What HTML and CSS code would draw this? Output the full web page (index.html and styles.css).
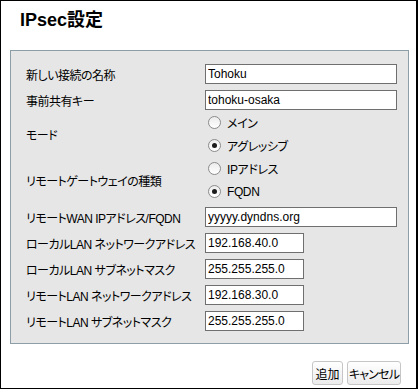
FILE: index.html
```html
<!DOCTYPE html>
<html lang="ja">
<head>
<meta charset="utf-8">
<title>IPsec設定</title>
<link rel="stylesheet" href="styles.css">
</head>
<body>
<div class="frame">
  <h1 class="title">IPsec設定</h1>
  <div class="panel">
    <div class="row">
      <label class="label">新しい接続の名称</label>
      <input class="field field-wide" type="text" value="Tohoku">
    </div>
    <div class="row row-tight">
      <label class="label">事前共有キー</label>
      <input class="field field-wide" type="text" value="tohoku-osaka">
    </div>
    <div class="row row-radio">
      <span class="label">モード</span>
      <div class="radios">
        <div class="radio-line"><span class="radio"></span><span class="radio-text">メイン</span></div>
        <div class="radio-line"><span class="radio checked"></span><span class="radio-text">アグレッシブ</span></div>
      </div>
    </div>
    <div class="row row-radio row-radio-last">
      <span class="label">リモートゲートウェイの種類</span>
      <div class="radios">
        <div class="radio-line"><span class="radio"></span><span class="radio-text">IPアドレス</span></div>
        <div class="radio-line"><span class="radio checked"></span><span class="radio-text">FQDN</span></div>
      </div>
    </div>
    <div class="row">
      <label class="label">リモートWAN IPアドレス/FQDN</label>
      <input class="field field-wide" type="text" value="yyyyy.dyndns.org">
    </div>
    <div class="row">
      <label class="label">ローカルLAN ネットワークアドレス</label>
      <input class="field field-short" type="text" value="192.168.40.0">
    </div>
    <div class="row">
      <label class="label">ローカルLAN サブネットマスク</label>
      <input class="field field-short" type="text" value="255.255.255.0">
    </div>
    <div class="row">
      <label class="label">リモートLAN ネットワークアドレス</label>
      <input class="field field-short" type="text" value="192.168.30.0">
    </div>
    <div class="row row-last">
      <label class="label">リモートLAN サブネットマスク</label>
      <input class="field field-short" type="text" value="255.255.255.0">
    </div>
  </div>
  <div class="actions">
    <button class="btn btn-add" type="button">追加</button>
    <button class="btn btn-cancel" type="button">キャンセル</button>
  </div>
</div>
</body>
</html>
```
FILE: styles.css
```css
html, body {
  margin: 0;
  padding: 0;
  background: #fff;
}

body {
  font-family: "Liberation Sans", Arial, "Noto Sans CJK JP", sans-serif;
  font-size: 12px;
  color: #000;
}

.frame {
  width: 418px;
  height: 389px;
  box-sizing: border-box;
  border: 1px solid #000;
  border-right-width: 2px;
  overflow: hidden;
}

.title {
  margin: 9px 0 0 19px;
  height: 21px;
  line-height: 21px;
  font-size: 18px;
  font-weight: bold;
  font-feature-settings: "palt";
}

.panel {
  margin: 19px 0 0 9px;
  width: 399px;
  box-sizing: border-box;
  background: #e6e6e6;
  border: 1px solid #8d9ea6;
  padding: 13px 0 12px 15px;
}

.row {
  display: flex;
  align-items: center;
  height: 20px;
  margin-bottom: 6px;
}

.row-tight {
  margin-bottom: 1px;
}

.row-radio {
  height: 46px;
  margin-bottom: 0;
}

.row-radio-last {
  margin-bottom: 4px;
}

.row-last {
  margin-bottom: 0;
}

.label {
  width: 179px;
  flex: none;
  white-space: nowrap;
  font-size: 12px;
  letter-spacing: -0.5px;
  font-feature-settings: "palt";
}

.field {
  box-sizing: border-box;
  height: 20px;
  margin: 0;
  border: 1px solid #6f6f6f;
  padding: 0 2px;
  background: #fff;
  font-family: "Liberation Sans", Arial, sans-serif;
  font-size: 12px;
  color: #000;
  outline: none;
}

.field-wide {
  width: 192px;
}

.field-short {
  width: 99px;
}

.radios {
  display: flex;
  flex-direction: column;
}

.radio-line {
  display: flex;
  align-items: center;
  height: 23px;
  padding-left: 3px;
}

.radio {
  width: 13px;
  height: 13px;
  box-sizing: border-box;
  border: 1px solid #8b8b8b;
  border-radius: 50%;
  background: linear-gradient(#ececec, #ffffff);
  display: flex;
  align-items: center;
  justify-content: center;
}

.radio.checked::after {
  content: "";
  width: 5px;
  height: 5px;
  border-radius: 50%;
  background: #1a1a1a;
}

.radio-text {
  margin-left: 6px;
  letter-spacing: -0.4px;
  font-feature-settings: "palt";
}

.actions {
  display: flex;
  justify-content: flex-end;
  gap: 4px;
  margin: 17px 15px 0 0;
}

.btn {
  height: 24px;
  box-sizing: border-box;
  margin: 0;
  padding: 0;
  border: 1px solid #c6c6c6;
  border-radius: 3px;
  background: linear-gradient(#ffffff, #ececec);
  font-family: "Liberation Sans", Arial, "Noto Sans CJK JP", sans-serif;
  font-size: 12px;
  color: #000;
  white-space: nowrap;
  overflow: visible;
  font-feature-settings: "palt";
}

.btn-add {
  width: 31px;
}

.btn-cancel {
  width: 54px;
  letter-spacing: -0.8px;
}
```
